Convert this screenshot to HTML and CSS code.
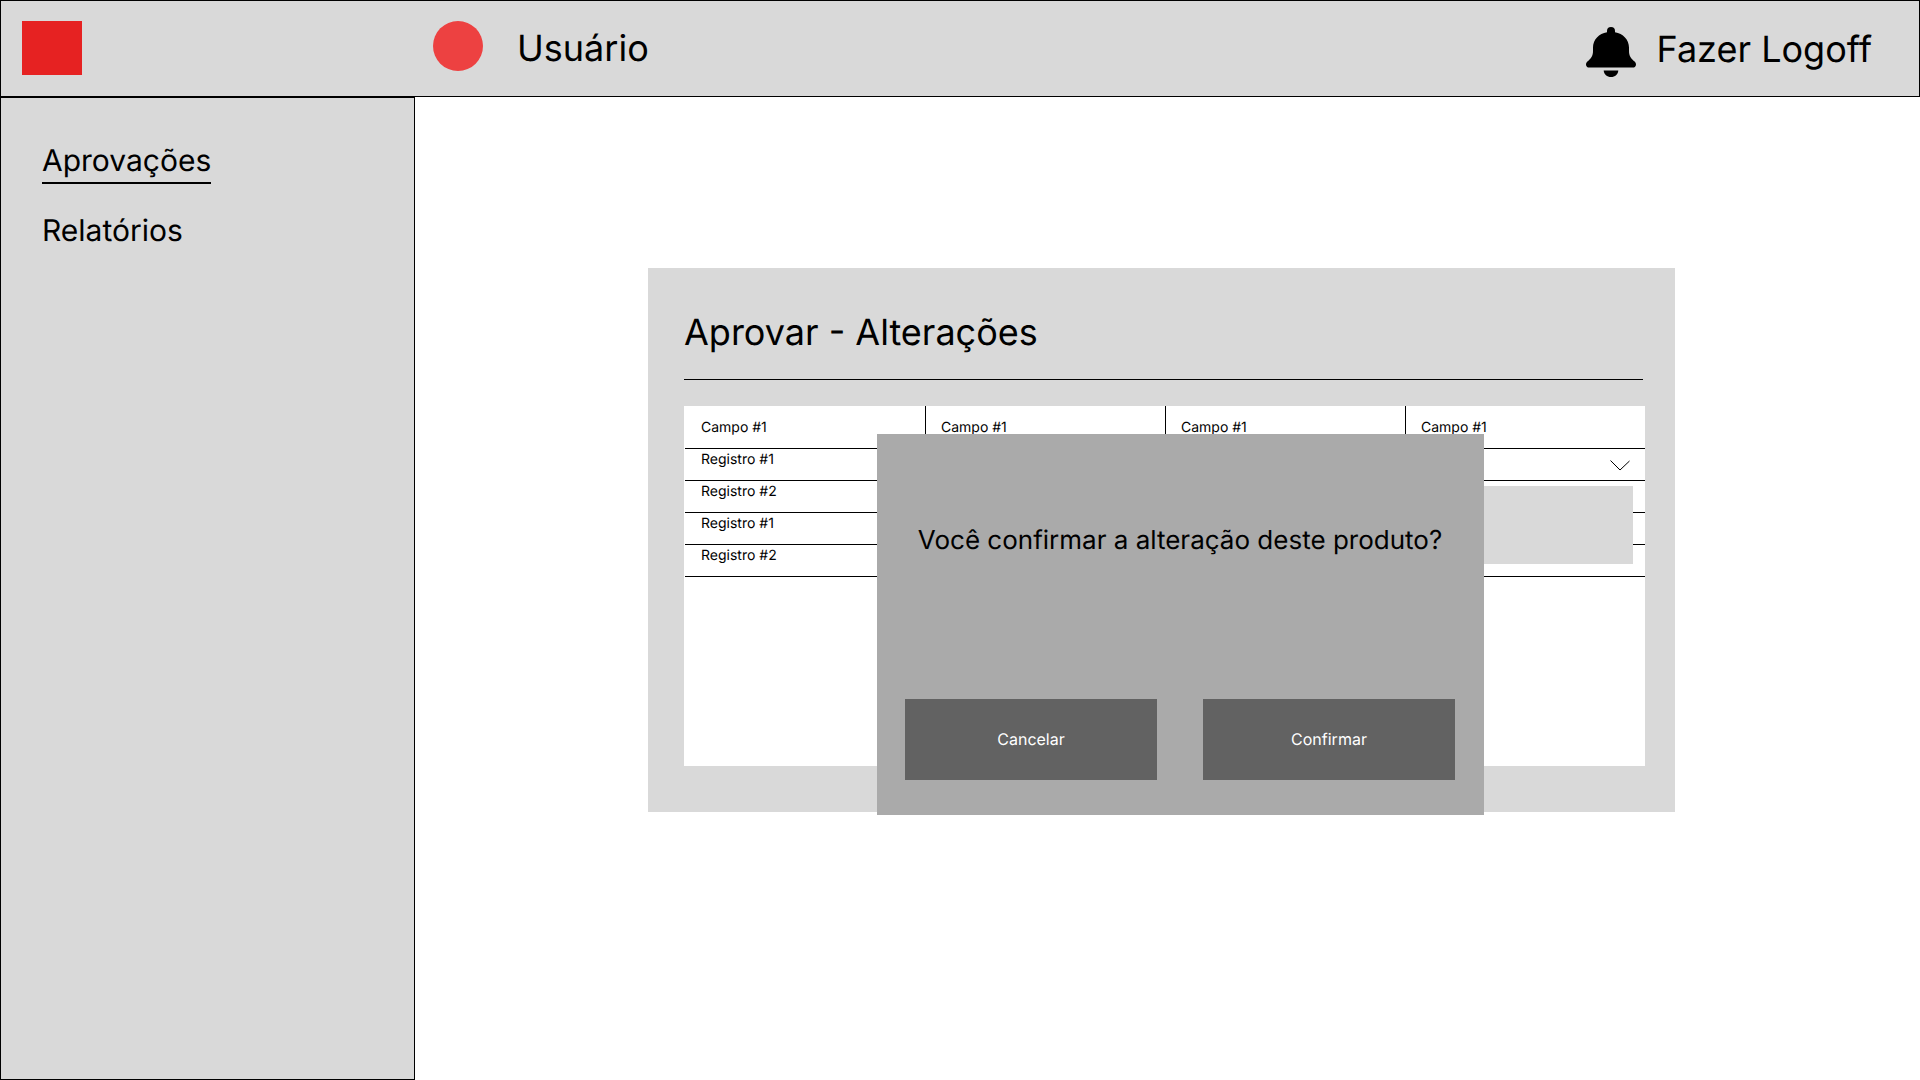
FILE: index.html
```html
<!DOCTYPE html>
<html lang="pt-BR">
<head>
  <meta charset="utf-8">
  <meta name="viewport" content="width=device-width, initial-scale=1">
  <title>Aprovar - Alterações</title>
  <link rel="stylesheet" href="styles.css">
</head>
<body>
  <header class="topbar">
    <div class="logo"></div>
    <div class="user">
      <span class="avatar"></span>
      <span class="user-name">Usuário</span>
    </div>
    <div class="session">
      <button class="icon-button" type="button" aria-label="Notificações">
        <svg class="bell" viewBox="0 0 50 50" aria-hidden="true">
          <path d="M21 5.200V4a4 4 0 0 1 8 0V5.200C37 6.500 43 12.600 43 20.500V24C43 29 45 31.500 48.600 34.600C49.600 35.500 50 36.500 50 37.500C50 39.500 48.600 40.600 46.800 40.600H3.200C1.400 40.600 0 39.500 0 37.500C0 36.500 .4 35.500 1.400 34.600C5 31.500 7 29 7 24V20.500C7 12.600 13 6.500 21 5.200Z"/>
          <path d="M17.700 43.500H32.300C32 47.500 29 50 25 50S18 47.500 17.700 43.500Z"/>
        </svg>
      </button>
      <a class="logoff" href="#">Fazer Logoff</a>
    </div>
  </header>

  <div class="layout">
    <nav class="sidebar">
      <a class="nav-link nav-link-active" href="#">Aprovações</a>
      <a class="nav-link" href="#">Relatórios</a>
    </nav>

    <main class="content">
      <section class="panel">
        <h1 class="panel-title">Aprovar - Alterações</h1>
        <div class="table-box">
          <table class="records">
            <thead>
              <tr><th scope="col">Campo #1</th><th scope="col">Campo #1</th><th scope="col">Campo #1</th><th scope="col">Campo #1</th></tr>
            </thead>
            <tbody>
              <tr>
                <td>Registro #1</td><td></td><td></td>
                <td class="menu-cell">
                  <button class="menu-toggle" type="button" aria-label="Abrir opções">
                    <svg class="chevron" viewBox="0 0 20 12" aria-hidden="true"><path d="M.5 .5L10 10L19.500 1"/></svg>
                  </button>
                  <div class="menu"></div>
                </td>
              </tr>
              <tr><td>Registro #2</td><td></td><td></td><td></td></tr>
              <tr><td>Registro #1</td><td></td><td></td><td></td></tr>
              <tr><td>Registro #2</td><td></td><td></td><td></td></tr>
            </tbody>
          </table>
        </div>

        <div class="dialog" role="dialog" aria-labelledby="dialog-text">
          <p class="dialog-text" id="dialog-text">Você confirmar a alteração deste produto?</p>
          <div class="dialog-actions">
            <button class="button" type="button">Cancelar</button>
            <button class="button" type="button">Confirmar</button>
          </div>
        </div>
      </section>
    </main>
  </div>
</body>
</html>
```
FILE: styles.css
```css
* {
  box-sizing: border-box;
}

body {
  display: flex;
  flex-direction: column;
  min-height: 100vh;
  margin: 0;
  background: #fff;
  color: #000;
  font-family: Inter, "Liberation Sans", sans-serif;
  text-rendering: geometricPrecision;
}

a {
  color: inherit;
  text-decoration: none;
}

button {
  margin: 0;
  padding: 0;
  border: 0;
  background: none;
  color: inherit;
  font: inherit;
  text-rendering: inherit;
  cursor: pointer;
}

.topbar {
  display: grid;
  grid-template-columns: 411px 1fr auto;
  padding: 20px 47px 18px 21px;
  border: 1px solid #000;
  background: #d9d9d9;
  font-size: 36px;
  line-height: 55px;
}

.logo {
  width: 60px;
  height: 54px;
  background: #e62222;
}

.user {
  display: flex;
  gap: 34px;
}

.avatar {
  width: 50px;
  height: 50px;
  border-radius: 50%;
  background: #ed4141;
}

.session {
  display: flex;
  gap: 21px;
  line-height: 57px;
}

.icon-button {
  display: flex;
  align-items: flex-end;
  padding-bottom: 1px;
}

.bell {
  display: block;
  width: 50px;
  height: 50px;
}

.layout {
  display: flex;
  flex: 1;
}

.sidebar {
  display: flex;
  flex: 0 0 415px;
  flex-direction: column;
  align-items: flex-start;
  gap: 27px;
  padding: 43px 41px;
  border: 1px solid #000;
  background: #d9d9d9;
  font-size: 30px;
  line-height: 40px;
}

.nav-link-active {
  padding-bottom: 1px;
  border-bottom: 2px solid #000;
}

.content {
  flex: 1;
  padding: 171px 245px 0 233px;
}

.panel {
  position: relative;
  padding: 42px 30px 46px 36px;
}

.panel,
.menu {
  background: #d9d9d9;
}

.panel-title {
  margin: 0 2px 26px 0;
  padding-bottom: 25px;
  border-bottom: 1px solid #000;
  font-size: 36px;
  font-weight: 400;
  line-height: 44px;
}

.table-box {
  min-height: 360px;
  padding-left: 1px;
  background: #fff;
}

.records {
  width: 100%;
  border-spacing: 0;
  table-layout: fixed;
  font-size: 14px;
  line-height: 17px;
}

.records th,
.records td {
  height: 32px;
  padding: 2px 16px 12px;
  border-bottom: 1px solid #000;
  font-weight: 400;
  text-align: left;
}

.records th {
  padding: 13px 15px 12px;
}

.records th:first-child {
  padding-left: 16px;
}

.records th + th {
  border-left: 1px solid #000;
}

.records .menu-cell {
  position: relative;
  padding: 0 15px;
}

.menu-toggle {
  display: block;
  margin-left: auto;
  padding: 4px 0 1px;
}

.chevron {
  display: block;
  width: 20px;
  height: 12px;
  fill: none;
  stroke: #000;
}

.menu {
  position: absolute;
  top: 37px;
  right: 12px;
  width: 216px;
  height: 78px;
}

.dialog {
  position: absolute;
  top: 166px;
  left: 229px;
  width: 607px;
  padding: 91px 29px 35px 28px;
  background: #aaa;
}

.dialog-text {
  margin: 0 0 142px;
  font-size: 26px;
  line-height: 32px;
  text-align: center;
}

.dialog-actions {
  display: grid;
  grid-template-columns: 1fr 1fr;
  gap: 46px;
}

.button {
  height: 81px;
  padding-bottom: 2px;
  background: #626262;
  color: #fff;
  font-size: 16px;
}
```
